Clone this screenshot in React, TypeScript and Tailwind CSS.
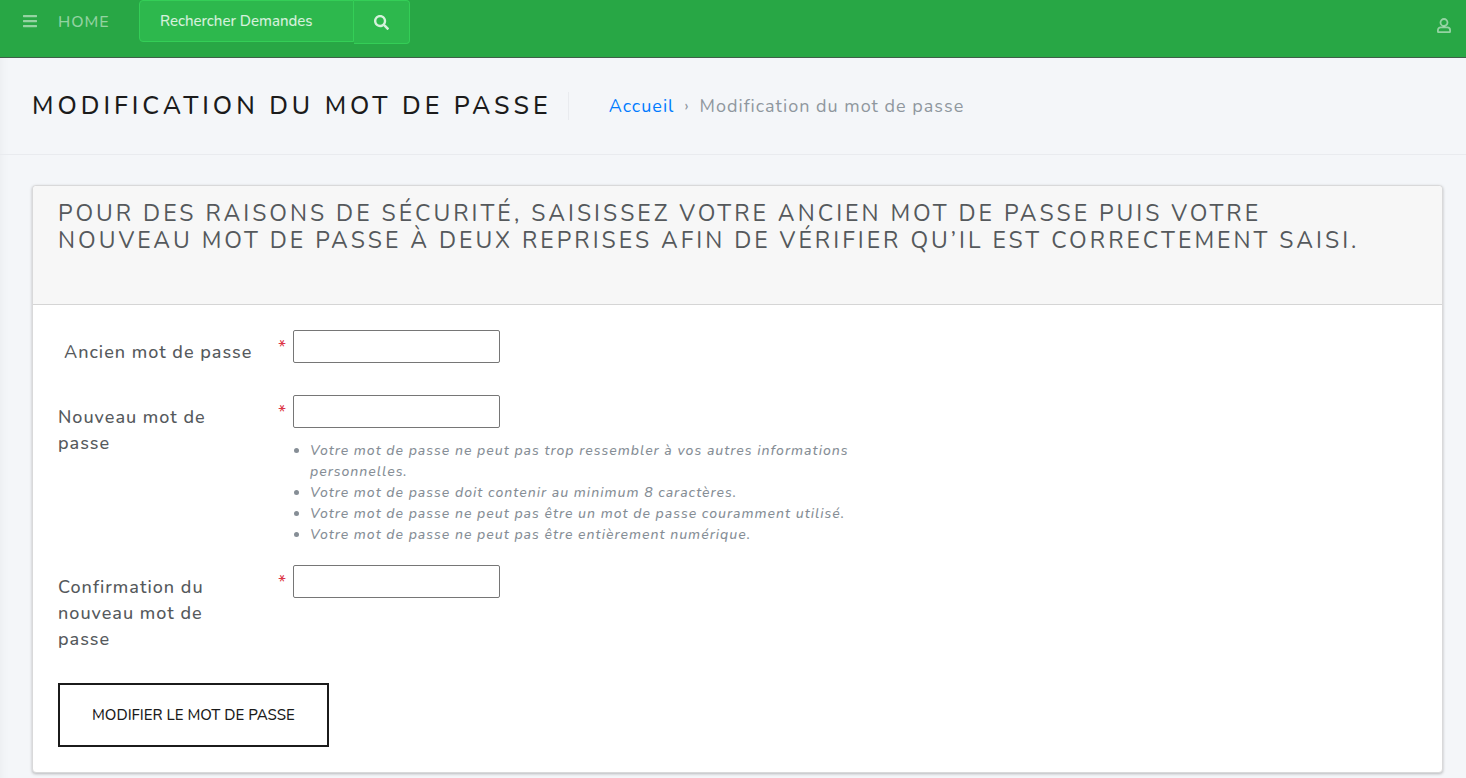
import type { ReactNode } from "react";
import { FaBars, FaSearch } from "react-icons/fa";

const passwordRules = [
  "Votre mot de passe ne peut pas trop ressembler à vos autres informations personnelles.",
  "Votre mot de passe doit contenir au minimum 8 caractères.",
  "Votre mot de passe ne peut pas être un mot de passe couramment utilisé.",
  "Votre mot de passe ne peut pas être entièrement numérique.",
];

function UserIcon() {
  return (
    <svg viewBox="0 0 14 15" className="h-[15px] w-3.5" fill="none" stroke="currentColor" strokeWidth="1.8" aria-hidden="true">
      <circle cx="7" cy="4.5" r="3.5" />
      <path d="M3.7 9.4h6.6a2.8 2.8 0 0 1 2.8 2.8v1.3c0 .4-.3.7-.7.7H1.6a.7.7 0 0 1-.7-.7v-1.3a2.8 2.8 0 0 1 2.8-2.8Z" />
    </svg>
  );
}

function TopBar() {
  return (
    <nav className="flex h-[58px] items-start justify-between border-b border-[#3f6049] bg-[#28a745] text-white/50">
      <div className="flex items-start">
        <button type="button" aria-label="Menu" className="ml-[22px] flex h-[42px] items-center">
          <FaBars size={16} />
        </button>
        <a href="#" className="ml-5 flex h-11 w-[81px] items-center text-base font-medium tracking-[1px]">
          HOME
        </a>
        <form className="flex items-start" onSubmit={(e) => e.preventDefault()}>
          <input
            type="search"
            aria-label="Rechercher Demandes"
            placeholder="Rechercher Demandes"
            className="h-[42px] w-[215px] rounded-l border border-[#34ce57] bg-[#2db84d] px-5 text-[15px] font-medium text-white outline-none placeholder:text-white/80"
          />
          <button
            type="submit"
            aria-label="Rechercher"
            className="flex h-11 w-14 items-center justify-center rounded-r border border-l-0 border-[#34ce57] bg-[#2db84d] text-white/80"
          >
            <FaSearch size={15} />
          </button>
        </form>
      </div>
      <button type="button" aria-label="Compte" className="mt-[18px] mr-[15px]">
        <UserIcon />
      </button>
    </nav>
  );
}

function PageHeader() {
  return (
    <header className="flex h-[97px] items-center border-b border-[#e9ebef] pl-8">
      <h1 className="border-r border-[#e9ebef] pr-4 text-[25px] leading-7 font-medium tracking-[4px] text-[#1b1b1b] uppercase">
        Modification du mot de passe
      </h1>
      <div className="flex items-center pl-10 text-lg tracking-[1px] text-[#8f979e]">
        <a href="#" className="text-[#007bff]">
          Accueil
        </a>
        <span className="px-2.5 text-base">›</span>
        <span>Modification du mot de passe</span>
      </div>
    </header>
  );
}

type FieldProps = { id: string; label: string; inset?: boolean; children?: ReactNode };

function Field({ id, label, inset, children }: FieldProps) {
  return (
    <div className="grid grid-cols-[220px_15px_1fr]">
      <label
        htmlFor={id}
        className={
          inset
            ? "pt-[9px] pl-1.5 text-lg leading-[26px] font-medium tracking-[1px] whitespace-nowrap"
            : "w-40 pt-[9px] text-lg leading-[26px] font-medium tracking-[1px]"
        }
      >
        {label}
      </label>
      <span className="pt-1 text-lg leading-[27px] text-[#dc3545]">*</span>
      <div>
        <input id={id} type="password" className="block h-[33px] w-[207px] rounded-xs border border-[#767676] bg-white px-2" />
        {children}
      </div>
    </div>
  );
}

export default function App() {
  return (
    <div className="min-h-screen bg-[#f4f6f9] font-['Nunito','Lato',sans-serif] text-[#55595c] shadow-[inset_12px_0_12px_-12px_rgba(0,0,0,0.05)]">
      <TopBar />
      <PageHeader />
      <main className="pt-[30px] pr-[23px] pb-8 pl-8">
        <section className="rounded border border-[#d9d9da] bg-white shadow-[0_1px_3px_rgba(0,0,0,0.25)]">
          <div className="min-h-[119px] rounded-t border-b border-[#d5d5d5] bg-[#f7f7f7] pt-3.5 pr-12 pl-[25px]">
            <h2 className="text-[23px] leading-[27px] tracking-[3px] uppercase">
              Pour des raisons de sécurité, saisissez votre ancien mot de passe puis votre nouveau mot de passe à deux
              reprises afin de vérifier qu’il est correctement saisi.
            </h2>
          </div>
          <form className="px-[25px] py-[25px]" onSubmit={(e) => e.preventDefault()}>
            <Field id="old" label="Ancien mot de passe" inset />
            <div className="mt-[30px]">
              <Field id="new" label="Nouveau mot de passe">
                <ul className="mt-3 max-w-[600px] list-disc pl-[17px] text-sm leading-[21px] font-medium tracking-[1px] text-[#868e96] italic">
                  {passwordRules.map((rule) => (
                    <li key={rule}>{rule}</li>
                  ))}
                </ul>
              </Field>
            </div>
            <div className="mt-5">
              <Field id="confirm" label="Confirmation du nouveau mot de passe" />
            </div>
            <button
              type="submit"
              className="mt-[31px] h-16 border-2 border-[#1b1b1b] px-8 text-[15px] font-medium whitespace-nowrap text-[#1b1b1b] uppercase"
            >
              Modifier le mot de passe
            </button>
          </form>
        </section>
      </main>
    </div>
  );
}
